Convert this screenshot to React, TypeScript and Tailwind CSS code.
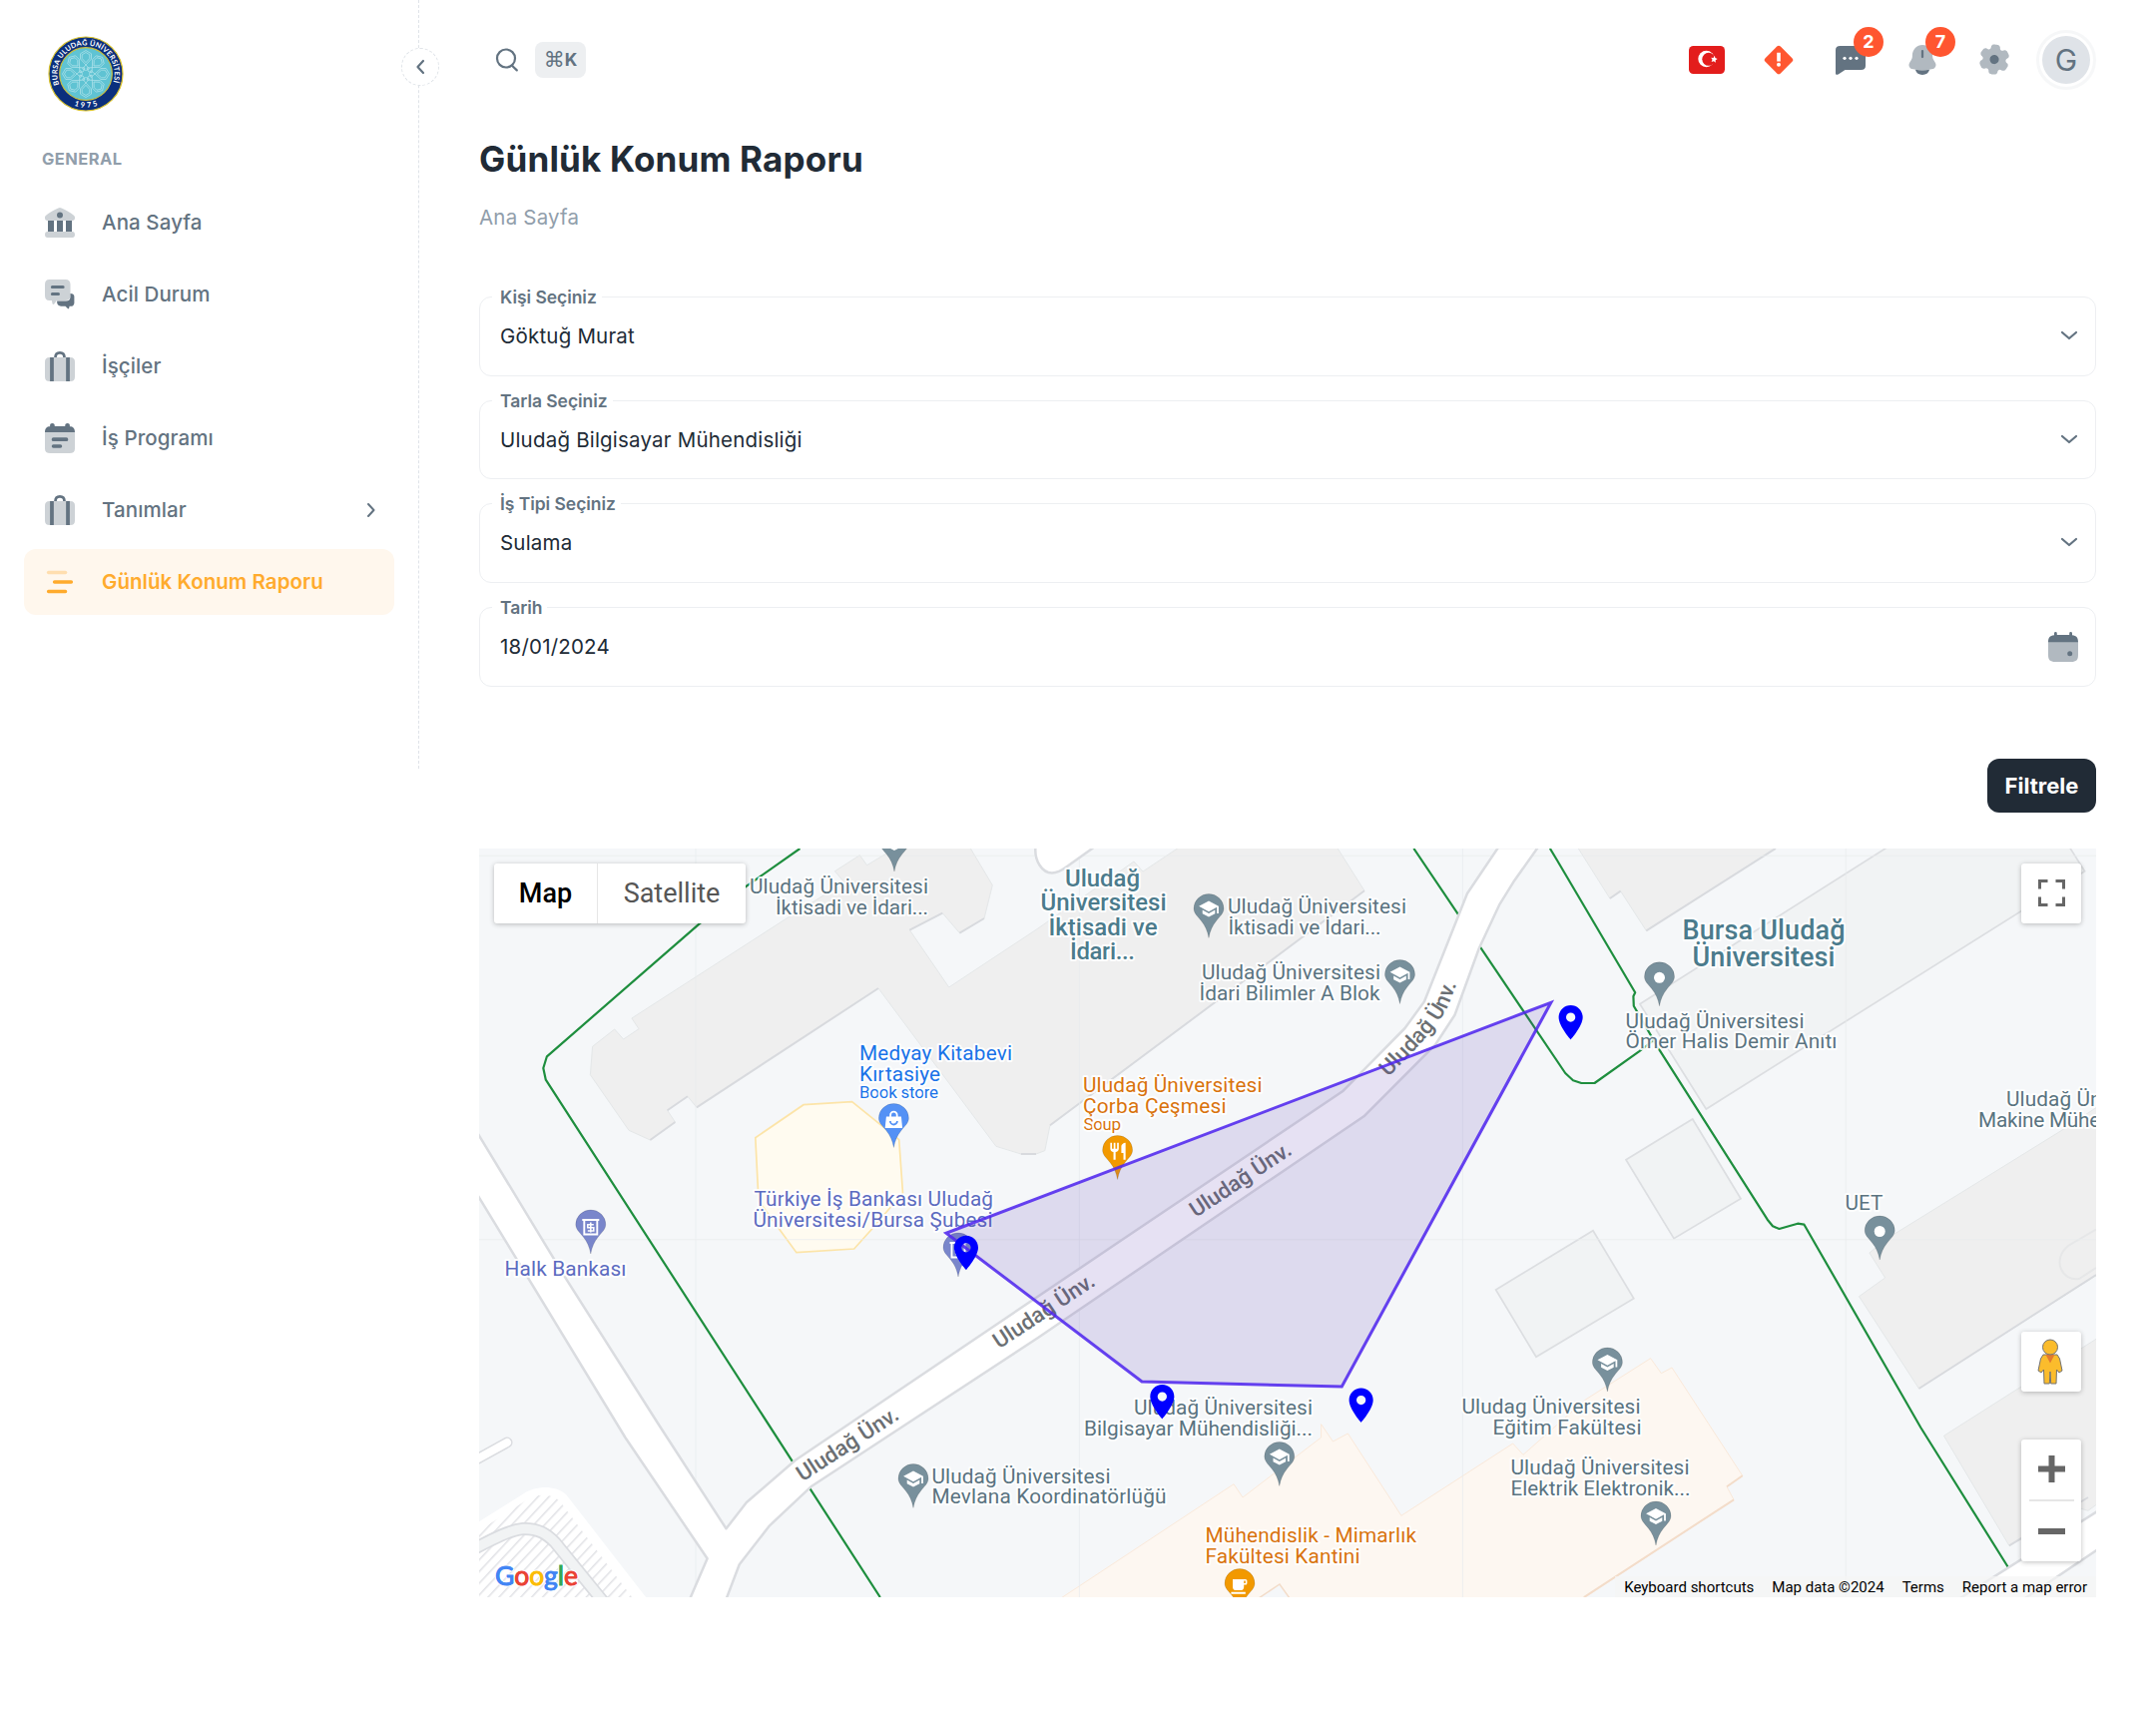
import React from 'react';

const INTER = "font-['Inter','Liberation_Sans',sans-serif]";

/* ---------- Sidebar icons (24 unit grid, duotone) ---------- */

function Duotone({ children }: { children: React.ReactNode }) {
  return (
    <svg viewBox="0 0 24 24" className="size-9 shrink-0" fill="currentColor">
      {children}
    </svg>
  );
}

const BankIcon = () => (
  <Duotone>
    <path opacity=".32" d="M10.9 2.25a2.6 2.6 0 0 1 2.2 0C16 3.5 19 5.300 20.900 6.800c.8.600 1.100 1 1.100 1.700v.5c0 1-.6 1.700-1.700 1.700H3.700C2.600 10.700 2 10 2 9v-.5c0-.7.3-1.100 1.100-1.700C5 5.300 8 3.500 10.900 2.250ZM3.700 18h16.600c1.100 0 1.700.8 1.700 2s-.6 2-1.700 2H3.700C2.600 22 2 21.200 2 20s.6-2 1.700-2Z" />
    <path d="M4 10.600h4V18H4zM10 10.600h4V18h-4zM16 10.600h4V18h-4zM12 5a2 2 0 1 1 0 4 2 2 0 0 1 0-4Z" />
  </Duotone>
);

const ChatsIcon = () => (
  <Duotone>
    <path d="M19 11.300v2.200c0 1.800-1 2.900-2.900 2.900h-6v1c0 1.300 1 2.200 2.600 2.400l3 .1 1.500 1.500c.3.300.8.200.9-.2l.3-1.300h.8c1.400 0 2.400-1 2.400-2.300v-4.300c0-1.200-1.100-2-2.600-2Z" />
    <path opacity=".32" d="M5 2h10.800C17.800 2 19 3.200 19 5.200v7.600c0 2-1.200 3.200-3.200 3.200h-5.900l-1.700 2.300c-.3.400-.9.400-1.200-.1L6.600 16H5c-2 0-3-1.200-3-3.200V5.200C2 3.200 3 2 5 2Z" />
    <path d="M6.900 6h7.200a1 1 0 1 1 0 2H6.900a1 1 0 1 1 0-2ZM6.900 10.600H11a1 1 0 1 1 0 2H6.900a1 1 0 1 1 0-2Z" />
  </Duotone>
);

const CaseIcon = () => (
  <Duotone>
    <path opacity=".32" d="M5 6h14c2 0 3 1 3 3v10c0 2-1 3-3 3H5c-2 0-3-1-3-3V9c0-2 1-3 3-3Z" />
    <path d="M5.400 6h2.500v16H5.400zM16.100 6h2.500v16h-2.500z" />
    <path d="M9 6c0-2 1-3.100 3-3.100S15 4 15 6" fill="none" stroke="currentColor" strokeWidth="1.800" />
  </Duotone>
);

const CalendarIcon = () => (
  <Duotone>
    <path opacity=".32" d="M2 8h20v11c0 2-1.200 3-3.500 3h-13C3.200 22 2 21 2 19Z" />
    <path d="M2 8c0-2.700 1.200-3.900 3.400-3.900V3.300C5.400 2.500 6 2 6.900 2s1.600.5 1.600 1.300V4h7v-.7C15.500 2.500 16.200 2 17.100 2s1.500.5 1.500 1.300v.8C20.800 4.100 22 5.300 22 8ZM7.700 11.500h8.600a1.200 1.200 0 1 1 0 2.500H7.700a1.200 1.200 0 1 1 0-2.500ZM7.700 16.100h4.600a1.200 1.200 0 1 1 0 2.400H7.700a1.200 1.200 0 1 1 0-2.400Z" />
  </Duotone>
);

const LinesIcon = () => (
  <Duotone>
    <g fill="none" stroke="currentColor" strokeWidth="2.300" strokeLinecap="round">
      <path opacity=".32" d="M4.400 5.700h11.300" />
      <path d="M8.400 12h11.200M4.400 18.300h11.300" />
    </g>
  </Duotone>
);

const nav = [
  { label: 'Ana Sayfa', icon: BankIcon },
  { label: 'Acil Durum', icon: ChatsIcon },
  { label: 'İşçiler', icon: CaseIcon },
  { label: 'İş Programı', icon: CalendarIcon },
  { label: 'Tanımlar', icon: CaseIcon, more: true },
  { label: 'Günlük Konum Raporu', icon: LinesIcon, active: true },
];

function Logo() {
  return (
    <svg viewBox="0 0 76 76" className="size-19">
      <defs>
        <path id="logo-top" d="M11.700 49.500A28.700 28.700 0 1 1 64.300 49.500" />
        <path id="logo-bottom" d="M20 66.600A34 34 0 0 0 56 66.600" />
      </defs>
      <circle cx="38" cy="38" r="37" fill="#0b2f7d" stroke="#d9c22e" strokeWidth="1.200" />
      <circle cx="38" cy="38" r="26.300" fill="#5fc3d3" stroke="#c9bf3f" strokeWidth="1.200" />
      <g fill="none" stroke="#c4ebf0" strokeWidth=".6">
        {[0, 45, 90, 135, 180, 225, 270, 315].map((a) => (
          <g key={a} transform={`rotate(${a} 38 38)`}>
            <path d="M38 14.500l5.500 3.300v5.200L38 29l-5.500-6v-5.200Z" />
            <path d="M38 16.500l3.800 2.300v3.700L38 26.700l-3.800-4.200v-3.700Z" />
            <path d="M38 29l-3.500 4 3.500 1.500 3.500-1.500Z" />
          </g>
        ))}
      </g>
      <text fill="#fff" fontSize="7.200" fontWeight="700" fontFamily="Lato, sans-serif">
        <textPath href="#logo-top" textLength="109" startOffset="1">BURSA ULUDAĞ ÜNİVERSİTESİ</textPath>
      </text>
      <text fill="#fff" fontSize="7.500" fontWeight="700" fontFamily="Lato, sans-serif">
        <textPath href="#logo-bottom" startOffset="7" textLength="24">1975</textPath>
      </text>
    </svg>
  );
}

function Sidebar() {
  return (
    <aside className="relative flex h-[770px] w-[420px] shrink-0 flex-col border-r border-dashed border-[#dfe3e8]">
      <div className="pt-9 pl-[47.500px]">
        <Logo />
      </div>
      <div className="mt-[35px] pl-[42px] text-[16.5px] leading-6 font-bold tracking-[0.45px] text-[#919eab]">GENERAL</div>
      <nav className="mt-[19px] flex flex-col gap-1.5 px-6">
        {nav.map(({ label, icon: Icon, more, active }) => (
          <a
            key={label}
            className={
              active
                ? 'flex h-[66px] items-center gap-6 rounded-xl bg-[#fff7ed] px-[18px] text-[20.5px] font-semibold tracking-[0.04px] text-[#ffab2d]'
                : 'flex h-[66px] items-center gap-6 rounded-xl px-[18px] text-[20.5px] font-medium tracking-[0.1px] text-[#637381]'
            }
          >
            <Icon />
            <span>{label}</span>
            {more && (
              <svg viewBox="0 0 10 16" className="ml-auto h-4 w-2.5" fill="none" stroke="currentColor" strokeWidth="2" strokeLinecap="round" strokeLinejoin="round">
                <path d="M2 2l5.500 6L2 14" />
              </svg>
            )}
          </a>
        ))}
      </nav>
      <button className="absolute top-12 -right-[21px] grid size-[38px] place-items-center rounded-full border border-dashed border-[#dfe3e8] bg-white text-[#637381]">
        <svg viewBox="0 0 10 16" className="h-4 w-2.5" fill="none" stroke="currentColor" strokeWidth="2.200" strokeLinecap="round" strokeLinejoin="round">
          <path d="M8 2L2.500 8 8 14" />
        </svg>
      </button>
    </aside>
  );
}

/* ---------- Header ---------- */

function IconButton({ badge, children }: { badge?: string; children: React.ReactNode }) {
  return (
    <button className="relative grid size-[60px] place-items-center text-[#637381]">
      {children}
      {badge && (
        <span className="absolute -top-[3px] left-[33px] grid size-[30px] place-items-center rounded-full bg-[#ff5630] text-[18px] leading-none font-bold text-white">
          {badge}
        </span>
      )}
    </button>
  );
}

function Header() {
  return (
    <header className="flex h-[120px] items-center justify-between pl-[18px]">
      <div className="flex items-center">
        <svg viewBox="0 0 24 24" className="-ml-0.5 size-6 text-[#637381]" fill="none" stroke="currentColor" strokeWidth="2.200" strokeLinecap="round">
          <circle cx="11" cy="10.500" r="9" />
          <path d="M17.500 18.200l4.300 4.200" />
        </svg>
        <span className="ml-4 flex h-9 w-[51px] items-center justify-center rounded-lg bg-[#edeff1] text-[17.500px] font-bold text-[#637381]">
          <span className="font-['DejaVu_Sans',sans-serif] text-[21px] leading-none font-normal">⌘</span>K
        </span>
      </div>
      <div className="flex items-center gap-3">
        <IconButton>
          <svg viewBox="0 0 36 28" className="h-7 w-9">
            <rect width="36" height="28" rx="4.500" fill="#e31d1c" />
            <circle cx="17.500" cy="13" r="8.200" fill="#fff" />
            <circle cx="19.800" cy="13.300" r="6.500" fill="#e31d1c" />
            <path d="M25.800 9.800l.6 2.300 2.300.9-2 1.300.1 2.400-1.900-1.500-2.300.7.900-2.200-1.300-2 2.300.2Z" fill="#fff" />
          </svg>
        </IconButton>
        <IconButton>
          <svg viewBox="0 0 32 32" className="size-8">
            <rect x="5.200" y="5.200" width="21.600" height="21.600" rx="2.600" transform="rotate(45 16 16)" fill="#ff5630" />
            <path d="M14.200 8.800h3.600v8.800h-3.600z" fill="#fff" />
            <circle cx="16" cy="20.700" r="2" fill="#fff" />
          </svg>
        </IconButton>
        <IconButton badge="2">
          <svg viewBox="0 0 30 30" className="size-[30px]" fill="currentColor">
            <path d="M4.500 1h21C28.500 1 30 2.500 30 5v16c0 2.500-1.500 4-4.500 4H9.500l-6.500 4.200C1.300 30.200 0 30 0 28.500V5C0 2.500 1.500 1 4.500 1Z" />
            <g fill="#fff">
              <circle cx="9" cy="13.300" r="1.600" />
              <circle cx="15" cy="13.300" r="1.600" />
              <circle cx="21" cy="13.300" r="1.600" />
            </g>
          </svg>
        </IconButton>
        <IconButton badge="7">
          <svg viewBox="0 0 24 24" className="size-9" fill="currentColor">
            <path opacity=".5" d="M18.750 9v.704c0 .845.240 1.671.692 2.374l1.108 1.723c1.011 1.574.239 3.713-1.520 4.210a25.800 25.800 0 0 1-14.060 0c-1.759-.497-2.531-2.636-1.520-4.210l1.108-1.723a4.400 4.400 0 0 0 .693-2.374V9c0-3.866 3.022-7 6.749-7s6.750 3.134 6.750 7" />
            <path d="M12.750 6a.75.75 0 0 0-1.500 0v4a.75.75 0 0 0 1.500 0zM7.243 18.545a5.002 5.002 0 0 0 9.513 0c-3.145.59-6.367.59-9.513 0" />
          </svg>
        </IconButton>
        <IconButton>
          <svg viewBox="0.500 0.300 24 24" className="size-9 rotate-6" fill="currentColor">
            <path opacity=".5" d="M14.279 2.152C13.909 2 13.439 2 12.500 2s-1.408 0-1.779.152a2 2 0 0 0-1.090 1.083c-.094.223-.13.484-.145.863a1.620 1.620 0 0 1-.796 1.353a1.640 1.640 0 0 1-1.579.008c-.338-.178-.583-.276-.825-.308a2.030 2.030 0 0 0-1.490.396c-.318.242-.553.646-1.022 1.453c-.47.807-.704 1.210-.757 1.605c-.07.526.074 1.058.4 1.479c.148.192.357.353.68.555c.477.297.783.803.783 1.361s-.306 1.064-.782 1.360c-.324.203-.533.364-.682.556a2 2 0 0 0-.399 1.479c.053.394.287.798.757 1.605s.704 1.210 1.022 1.453c.424.323.96.465 1.490.396c.242-.032.487-.13.825-.308a1.640 1.640 0 0 1 1.580.008c.486.280.774.795.795 1.353c.015.380.051.640.145.863c.204.490.596.880 1.090 1.083c.370.152.840.152 1.779.152s1.409 0 1.779-.152a2 2 0 0 0 1.090-1.083c.094-.223.130-.483.145-.863c.02-.558.309-1.074.796-1.353a1.640 1.640 0 0 1 1.579-.008c.338.178.583.276.825.308c.530.070 1.066-.073 1.490-.396c.318-.242.553-.646 1.022-1.453c.470-.807.704-1.210.757-1.605a2 2 0 0 0-.4-1.479c-.148-.192-.357-.353-.68-.555c-.477-.297-.783-.803-.783-1.361s.306-1.064.782-1.360c.324-.203.533-.364.682-.556a2 2 0 0 0 .399-1.479c-.053-.394-.287-.798-.757-1.605s-.704-1.210-1.022-1.453a2.030 2.030 0 0 0-1.490-.396c-.242.032-.487.130-.825.308a1.640 1.640 0 0 1-1.580-.008a1.620 1.620 0 0 1-.795-1.353c-.015-.38-.051-.64-.145-.863a2 2 0 0 0-1.090-1.083" />
            <circle cx="12.500" cy="12" r="3.050" />
          </svg>
        </IconButton>
        <button className="grid size-[60px] place-items-center rounded-full border-3 border-[#f6f7f8]">
          <span className="grid size-12 place-items-center rounded-full bg-[#dfe3e8] text-[30px] leading-none text-[#637381]">G</span>
        </button>
      </div>
    </header>
  );
}

/* ---------- Filter form ---------- */

function Field({ label, value, calendar }: { label: string; value: string; calendar?: boolean }) {
  return (
    <div className="relative flex h-[79.690px] items-center justify-between rounded-xl border-[1.500px] border-[#edeff2] pr-[17px] pl-5">
      <span className="absolute -top-3 left-3 bg-white pr-[5px] pl-2 text-[17.500px] leading-6 font-semibold tracking-[-0.050px] text-[#637381]">{label}</span>
      <span className="pt-px text-[20.500px] tracking-[0.200px] text-[#212b36]">{value}</span>
      {calendar ? (
        <svg viewBox="0 0 30 30" className="size-[30px] text-[#637381]" fill="currentColor">
          <path opacity=".5" d="M0 10.500h30V23c0 5-2 7-7 7H7c-5 0-7-2-7-7Z" />
          <path d="M0 10.500C0 6 1.500 3.500 6 3.200V1.500a1.400 1.400 0 0 1 2.800 0V3h12.400V1.500a1.400 1.400 0 0 1 2.800 0v1.700c4.500.3 6 2.800 6 7.300Z" />
          <circle cx="21.700" cy="21.700" r="2.500" />
        </svg>
      ) : (
        <svg viewBox="0 0 18 10" className="-mt-0.5 h-2.5 w-[18px]" fill="none" stroke="#637381" strokeWidth="2.200" strokeLinecap="round" strokeLinejoin="round">
          <path d="M2 2l7 6 7-6" />
        </svg>
      )}
    </div>
  );
}

/* ---------- Map ---------- */

const GRAY = '#5a7380';
const TEAL = '#4b7b8c';
const BLUE = '#1a73e8';
const INDIGO = '#5c6bc0';
const ORANGE = '#d9730d';

type Label = { t: string; x: number; y: number; w?: number; c: string; s?: number; b?: boolean };

const labels: Label[] = [
  { t: 'Uludağ Üniversitesi', x: 751, y: 895, w: 179, c: GRAY },
  { t: 'İktisadi ve İdari...', x: 777, y: 916, w: 153, c: GRAY },
  { t: 'Uludağ Üniversitesi', x: 1230, y: 914.8, w: 179, c: GRAY },
  { t: 'İktisadi ve İdari...', x: 1230.5, y: 935.8, w: 153, c: GRAY },
  { t: 'Uludağ Üniversitesi', x: 1204, y: 980.5, w: 179, c: GRAY },
  { t: 'İdari Bilimler A Blok', x: 1201.5, y: 1001.5, w: 181, c: GRAY },
  { t: 'Uludağ', x: 1067, y: 888, w: 75, c: TEAL, s: 24, b: true },
  { t: 'Üniversitesi', x: 1042.5, y: 912.3, w: 126, c: TEAL, s: 24, b: true },
  { t: 'İktisadi ve', x: 1050.5, y: 936.6, w: 109, c: TEAL, s: 24, b: true },
  { t: 'İdari...', x: 1072, y: 961, w: 65, c: TEAL, s: 24, b: true },
  { t: 'Bursa Uludağ', x: 1685.5, y: 941, w: 163, c: TEAL, s: 27, b: true },
  { t: 'Üniversitesi', x: 1695.5, y: 968, w: 143, c: TEAL, s: 27, b: true },
  { t: 'Uludağ Üniversitesi', x: 1628.5, y: 1029.5, w: 179, c: GRAY },
  { t: 'Ömer Halis Demir Anıtı', x: 1628.5, y: 1050, w: 212, c: GRAY },
  { t: 'Uludağ Üniversitesi', x: 2010, y: 1108, w: 179, c: GRAY },
  { t: 'Makine Mühendisliği', x: 1982, y: 1129, w: 186, c: GRAY },
  { t: 'UET', x: 1848.5, y: 1211.5, w: 38, c: GRAY },
  { t: 'Medyay Kitabevi', x: 861, y: 1061.5, w: 153, c: BLUE },
  { t: 'Kırtasiye', x: 861, y: 1082.5, w: 81, c: BLUE },
  { t: 'Book store', x: 861, y: 1100, w: 79, c: BLUE, s: 17 },
  { t: 'Türkiye İş Bankası Uludağ', x: 755.5, y: 1208, w: 239.5, c: INDIGO },
  { t: 'Üniversitesi/Bursa Şubesi', x: 754.5, y: 1229, w: 240, c: INDIGO },
  { t: 'Halk Bankası', x: 505.500, y: 1277.5, w: 122, c: INDIGO },
  { t: 'Uludağ Üniversitesi', x: 933.5, y: 1485.5, w: 179, c: GRAY },
  { t: 'Mevlana Koordinatörlüğü', x: 933.5, y: 1506, w: 235, c: GRAY },
  { t: 'Uludağ Üniversitesi', x: 1136, y: 1417, w: 179, c: GRAY },
  { t: 'Bilgisayar Mühendisliği...', x: 1086, y: 1438, w: 229, c: GRAY },
  { t: 'Uludag Üniversitesi', x: 1464.5, y: 1415.5, w: 179, c: GRAY },
  { t: 'Eğitim Fakültesi', x: 1495.5, y: 1436.8, w: 149, c: GRAY },
  { t: 'Uludağ Üniversitesi', x: 1513.5, y: 1476.5, w: 179, c: GRAY },
  { t: 'Elektrik Elektronik...', x: 1513.5, y: 1497.5, w: 180, c: GRAY },
  { t: 'Mühendislik - Mimarlık', x: 1207.5, y: 1544.5, w: 211.5, c: ORANGE },
  { t: 'Fakültesi Kantini', x: 1207.5, y: 1565.5, w: 155, c: ORANGE },
  { t: 'Uludağ Üniversitesi', x: 1085, y: 1094, w: 179.5, c: ORANGE },
  { t: 'Çorba Çeşmesi', x: 1085, y: 1114.7, w: 143.5, c: ORANGE },
  { t: 'Soup', x: 1085.5, y: 1132, w: 37.5, c: ORANGE, s: 17 },
];

function Glyph({ kind }: { kind: string }) {
  switch (kind) {
    case 'school':
      return <path transform="translate(-10.800 4.200) scale(.9)" d="M5 13.180v4L12 21l7-3.820v-4L12 17l-7-3.820zM12 3L1 9l11 6 9-4.910V17h2V9L12 3z" fill="#fff" />;
    case 'dot':
      return <circle cy="15.500" r="5.500" fill="#fff" />;
    case 'bag':
      return (
        <g>
          <path d="M-7.500 13h15l1.200 11.500H-8.700Z" fill="#fff" />
          <path d="M-3.300 14v-2.500a3.300 3.300 0 0 1 6.600 0V14" fill="none" stroke="#fff" strokeWidth="1.800" />
          <path d="M-3.500 17.500a3.500 3.500 0 0 0 7 0" fill="none" stroke="#5491f5" strokeWidth="1.800" />
        </g>
      );
    case 'food':
      return <path transform="translate(-9.800 5.500) scale(.85)" d="M11 9H9V2H7v7H5V2H3v7c0 2.120 1.660 3.840 3.750 3.970V22h2.500v-9.030C11.340 12.840 13 11.120 13 9V2h-2v7zm5-3v8h2.500v8H21V2c-2.760 0-5 2.240-5 4z" fill="#fff" />;
    case 'cup':
      return <path transform="translate(-10.200 8) scale(.8)" d="M20 3H4v10c0 2.210 1.790 4 4 4h6c2.210 0 4-1.790 4-4v-3h2c1.110 0 2-.89 2-2V5c0-1.110-.89-2-2-2zm0 5h-2V5h2v3zM2 19h18v2.500H2z" fill="#fff" />;
    default:
      return (
        <g fill="none" stroke="#fff">
          <path d="M-8.500 10h17" strokeWidth="2" />
          <path d="M-6.500 10v14.500h13V10" strokeWidth="1.900" />
          <path d="M3 14.800h-6v3h6v3.200h-6M0 12.500v10" strokeWidth="1.500" />
        </g>
      );
  }
}

const pois: [number, number, string, string][] = [
  [896, 829, 'school', '#78909c'],
  [1211, 895.5, 'school', '#78909c'],
  [1402.5, 961.5, 'school', '#78909c'],
  [1662.5, 963.8, 'dot', '#78909c'],
  [1883.2, 1218, 'dot', '#78909c'],
  [895.4, 1105.5, 'bag', '#5491f5'],
  [1119.6, 1137.5, 'food', '#f29900'],
  [591.8, 1212, 'bank', '#7986cb'],
  [960, 1235, 'bank', '#7986cb'],
  [915, 1466.5, 'school', '#78909c'],
  [1281.8, 1444.5, 'school', '#78909c'],
  [1610.4, 1350, 'school', '#78909c'],
  [1659, 1504, 'school', '#78909c'],
  [1242, 1571.5, 'cup', '#f29900'],
];

const markers: [number, number][] = [
  [1573.6, 1007],
  [1164.3, 1387],
  [1363.6, 1390.5],
  [967.9, 1237.7],
];

function MapDrawing() {
  return (
    <svg viewBox="480 850 1620 750" className="absolute inset-0 h-full w-full" fontFamily="Roboto, sans-serif">
      <defs>
        <pattern id="hatch" width="8" height="8" patternUnits="userSpaceOnUse" patternTransform="rotate(-47)">
          <rect width="8" height="8" fill="#fff" />
          <rect width="8" height="1.500" fill="#e1e2e6" />
        </pattern>
        <path id="road-curve" d="M1391 1079C1417 1052 1443 1027 1452 1005C1458 990 1462 979 1466 966" />
      </defs>
      <rect x="480" y="850" width="1620" height="750" fill="#f5f7f9" />

      {/* buildings */}
      <g fill="#efefef" stroke="#e4e7e8" strokeWidth="1">
        <path d="M836.400 872.700L861.400 856.700 868.600 866.700 898 849H971.800L994.300 886.700 986 920 961.400 934.700 944.300 914.700 911.400 931.700 950.700 989 1040 930 1136 863 1145 873 1181 849H1339.600L1367 892.300 1052 1127.300 1046.800 1152.700 1038 1156H1022.900L997.900 1148.300 880 990 697.900 1109.300 688.900 1098.300 668.600 1112.300 676.400 1124 651.400 1142 630 1132.300 591.400 1076.700 593.600 1048.300 615.700 1031 624.600 1041 640 1030.700 632.900 1020 790.700 918.300 846 884Z" />
        <path d="M1580.700 849L1612.900 900 1623.600 892.700 1649.300 932.300 1779 849Z" />
        <path d="M2101 1109L2064 1133.300 1890 1241 1872.900 1255 1888.600 1280 1862.500 1298.700 1922.500 1391 2101 1277Z" />
        <path d="M1947.500 1438.300L2101 1340.700V1506.700L2092 1513.300 2084 1511 2012.900 1548.300Z" />
      </g>
      <g fill="none" stroke="#d8dade" strokeWidth="2">
        <path d="M697.900 1109.300L880 990M986 920L961.400 934.700M944.300 914.700L911.400 931.700M688.900 1098.300L668.600 1112.300M676.400 1124L651.400 1142M1367 892.300L1052 1127.300M1038 1156H1022.900M1649.300 932.300L1779 850M1612.900 900L1623.600 892.700M1922.500 1391L2100 1277M2012.900 1548.300L2092 1500" />
      </g>
      <path d="M2100 1231.700L2072 1248C2055 1262 2066 1284 2083 1281L2100 1270" fill="none" stroke="#e6e7e8" strokeWidth="2" />
      <g fill="#f1f3f4" stroke="#dcdee1" strokeWidth="1.700">
        <path d="M1642.900 1005.700L1890.400 849H2073.600L2088.600 872.700 1709.300 1111Z" />
        <path d="M1629 1161.700L1695.700 1121 1744 1200.700 1677 1240.700Z" />
        <path d="M1498.600 1292L1596 1232.700 1636.800 1300.700 1539 1359.300Z" />
      </g>
      <path d="M756.800 1139.700L805 1106.700 853.600 1103.700 900.700 1141.700 904.500 1195 873 1231.700 855.700 1251 797.900 1254.700 760 1203Z" fill="#fffbf0" stroke="#fce4a8" strokeWidth="1.700" />

      {/* engineering faculty */}
      <path d="M1062.900 1601L1236 1486.700 1245 1500 1323.600 1440 1323.600 1426.700 1335.400 1444 1350.400 1436 1403.900 1518.300 1515.700 1446 1526 1457.300 1588.600 1402 1653.600 1360.700 1664.300 1375.700 1675 1370 1745.700 1478.300 1730 1489.300 1737 1502.300 1586.800 1601Z" fill="#fdf7f1" stroke="#fae9da" strokeWidth="1" />
      <path d="M1745.700 1478.300L1730 1489.300M1737 1502.300L1586.800 1600" fill="none" stroke="#f3dcc9" strokeWidth="2" />
      <path d="M1261 1601L1282 1587 1292 1601Z" fill="#f5f7f9" stroke="#f3dcc9" strokeWidth="1.500" />

      {/* parking area */}
      <path d="M479 1525L525 1496C536 1489 555 1487 567 1497L647.900 1601H479Z" fill="#fff" />
      <path d="M479 1534L527 1503C538 1496 553 1496 561 1504L634 1601H479Z" fill="url(#hatch)" />
      <g fill="none" strokeLinejoin="round">
        <path d="M470 1554C495 1541 510 1533 524 1531.500C540 1531 548 1537 556 1545L604 1604" stroke="#dadce0" strokeWidth="13" />
        <path d="M470 1554C495 1541 510 1533 524 1531.500C540 1531 548 1537 556 1545L604 1604" stroke="#f1f3f4" strokeWidth="9.500" />
        <path d="M470 1466L508 1445" stroke="#dadce0" strokeWidth="11" strokeLinecap="round" />
        <path d="M470 1466L508 1445" stroke="#fff" strokeWidth="8" strokeLinecap="round" />
      </g>

      {/* tile seams */}
      <path d="M697 850V1600M1081.400 850V1600M1465.400 850V1600M1849.300 850V1600M480 857.300H2100M480 1241.700H2100" stroke="#e8ebee" strokeOpacity=".7" strokeWidth="1" />

      {/* green boundary */}
      <g fill="none" stroke="#1e8e3e" strokeWidth="2.200" strokeLinejoin="round">
        <path d="M801.400 850L747.900 887.700 700.400 925.700 547.900 1058.300 544.300 1070 546.800 1081.700 881.800 1600" />
        <path d="M1416.400 850L1568.200 1075 1576 1082.300 1584.300 1085H1597.500L1642 1053.300 1658 1041" />
        <path d="M1552.900 850L1560 861.700 1638.200 994.300 1636.400 998 1636.800 1007.700 1661.800 1050.700 1770.700 1221.700 1776 1228.300 1782.500 1231 1801 1225.700 1807.500 1226.700 1924.300 1430 2012.500 1571 2030 1600" />
      </g>

      {/* roads */}
      <g fill="#fff" stroke="#dadce0" strokeWidth="2.500" strokeLinejoin="round">
        <path d="M1037.500 848C1036 862 1044 874.500 1054 874.500C1060 874.500 1065 871 1069 868L1097 848Z" />
        <path d="M1501 849L1470 895 1427 1003.300 1407.500 1030 1345 1093.300 1127 1240 796.800 1462.700 747.900 1505 727.500 1531.300 658.600 1425 567.500 1281.700 476 1131V1193L626.400 1440 708.600 1561.300 691 1602H727.500L740.700 1567.300 771 1528.300 813.200 1488.700 1040 1340 1216.400 1220 1366.400 1118.300 1437.900 1046.700 1457.500 1016.700 1481.800 950 1502 906.700 1516.400 883.300 1540.700 849Z" />
        <path d="M1963.600 1601L2102 1513.500V1552L2026 1603Z" />
      </g>

      {/* road names */}
      <g fill="#6b6f73" fontSize="22" fontWeight="500">
        <text transform="translate(804 1484.500) rotate(-33)" textLength="117">Uludağ Ünv.</text>
        <text transform="translate(1001 1351.500) rotate(-33.500)" textLength="117">Uludağ Ünv.</text>
        <text transform="translate(1198 1220) rotate(-33.500)" textLength="117">Uludağ Ünv.</text>
        <text>
          <textPath href="#road-curve" textLength="117">Uludağ Ünv.</textPath>
        </text>
      </g>

      {/* points of interest */}
      {pois.map(([x, y, kind, color]) => (
        <g key={`${x}-${y}`} transform={`translate(${x} ${y})`}>
          <path d="M0 44C-1.300 37-3.500 32-7.500 27C-12 21.500-15 19-15 14.500A15 14.500 0 0 1 15 14.500C15 19 12 21.500 7.500 27C3.500 32 1.300 37 0 44Z" fill={color} stroke="#000" strokeOpacity=".12" strokeWidth="1" />
          <Glyph kind={kind} />
        </g>
      ))}
      <g stroke="#fff" strokeWidth="4" strokeLinejoin="round" paintOrder="stroke">
        {labels.map(({ t, x, y, w, c, s = 20.8, b }) => (
          <text key={`${x}-${y}`} x={x} y={y} textLength={w} fontSize={s} fontWeight={b ? 500 : 400} fill={c} strokeOpacity=".9">
            {t}
          </text>
        ))}
      </g>

      {/* selected field and its corners */}
      <path d="M1553.900 1004.300L1344.300 1389 1144 1384 947.900 1235.300Z" fill="#5535b0" fillOpacity=".15" stroke="#5128ee" strokeOpacity=".88" strokeWidth="3" />
      {markers.map(([x, y]) => (
        <path key={x} transform={`translate(${x - 20.6} ${y - 3.4}) scale(1.720)`} fill="#00f" d="M12 2C8.130 2 5 5.130 5 9c0 5.250 7 13 7 13s7-7.750 7-13c0-3.870-3.130-7-7-7zm0 9.700a2.700 2.700 0 1 1 0-5.400 2.700 2.700 0 0 1 0 5.400z" />
      ))}
    </svg>
  );
}

const card = 'bg-white shadow-[0_1px_5px_rgba(0,0,0,0.25)] rounded-[3px]';

function MapPanel() {
  return (
    <div className="relative mt-9 h-[750px] overflow-hidden font-['Roboto',sans-serif]">
      <MapDrawing />
      <div className={`absolute top-[15px] left-[15px] flex h-[60px] w-[252px] text-[27px] ${card}`}>
        <div className="flex w-[104px] items-center justify-center border-r border-[#e6e6e6] pt-px font-medium text-black">Map</div>
        <div className="flex flex-1 items-center justify-center pt-px text-[#565656]">Satellite</div>
      </div>
      <div className={`absolute top-[15px] right-[15px] grid size-[60px] place-items-center ${card}`}>
        <svg viewBox="0 0 27 27" className="size-[27px]" fill="none" stroke="#666" strokeWidth="3">
          <path d="M1.500 9.500v-8h8M17.500 1.500h8v8M25.500 17.500v8h-8M9.500 25.500h-8v-8" />
        </svg>
      </div>
      <div className={`absolute top-[484px] right-[15px] grid size-[60px] place-items-center ${card}`}>
        <svg viewBox="0 0 26 46" className="mr-0.5 h-[46px] w-[26px]" stroke="#737373" strokeWidth="1">
          <path d="M6 16h14l2.500 4L25 32l-3 2-2.500-3-.5 14h-5.300L13 33l-.7 12H7l-.5-14L4 34l-3-2L3.500 20Z" fill="#fbbc2c" />
          <path d="M8.500 16h9L13 24.500Z" fill="#e37a2e" stroke="none" />
          <circle cx="13" cy="8.500" r="7.500" fill="#fbbc2c" />
        </svg>
      </div>
      <div className={`absolute top-[592px] right-[15px] flex h-[122px] w-[60px] flex-col items-center ${card}`}>
        <div className="grid flex-1 place-items-center">
          <svg viewBox="0 0 27 27" className="size-[27px]" fill="#666">
            <path d="M10.500 0h6v10.500H27v6H16.500V27h-6V16.500H0v-6h10.500z" />
          </svg>
        </div>
        <div className="h-[1.500px] w-[45px] bg-[#e6e6e6]" />
        <div className="grid flex-1 place-items-center">
          <div className="h-1.5 w-[27px] bg-[#666]" />
        </div>
      </div>
      <svg viewBox="0 0 90 36" className="absolute top-[712px] left-[14px] h-9 w-[90px] overflow-visible">
        <text x="2" y="26" textLength="83" lengthAdjust="spacingAndGlyphs" fontSize="27.500" fontWeight="400" fontFamily="Lato, sans-serif" stroke="#fff" strokeWidth="3" strokeLinejoin="round" paintOrder="stroke">
          <tspan fill="#4285f4">G</tspan>
          <tspan fill="#ea4335">o</tspan>
          <tspan fill="#fbbc05">o</tspan>
          <tspan fill="#4285f4">g</tspan>
          <tspan fill="#34a853">l</tspan>
          <tspan fill="#ea4335">e</tspan>
        </text>
        <text x="2" y="26" textLength="83" lengthAdjust="spacingAndGlyphs" fontSize="27.500" fontFamily="Lato, sans-serif" strokeWidth=".9" aria-hidden="true">
          <tspan fill="#4285f4" stroke="#4285f4">G</tspan>
          <tspan fill="#ea4335" stroke="#ea4335">o</tspan>
          <tspan fill="#fbbc05" stroke="#fbbc05">o</tspan>
          <tspan fill="#4285f4" stroke="#4285f4">g</tspan>
          <tspan fill="#34a853" stroke="#34a853">l</tspan>
          <tspan fill="#ea4335" stroke="#ea4335">e</tspan>
        </text>
      </svg>
      <div className="absolute right-0 bottom-0 flex h-[21px] items-center gap-[18px] bg-[#f5f5f5]/70 px-[9px] pt-0.5 text-[15px] text-black">
        <span>Keyboard shortcuts</span>
        <span>Map data ©2024</span>
        <span>Terms</span>
        <span>Report a map error</span>
      </div>
    </div>
  );
}

export default function App() {
  return (
    <div className={`flex h-[1732px] w-[2160px] bg-white ${INTER}`}>
      <Sidebar />
      <main className="flex flex-1 flex-col px-[60px]">
        <Header />
        <h1 className="mt-3 text-[35px] leading-[54px] font-bold tracking-[0.180px] text-[#212b36]">Günlük Konum Raporu</h1>
        <div className="mt-4 text-[20.500px] leading-8 tracking-[0.200px] text-[#919eab]">Ana Sayfa</div>
        <form className="mt-[63px] flex flex-col gap-6">
          <Field label="Kişi Seçiniz" value="Göktuğ Murat" />
          <Field label="Tarla Seçiniz" value="Uludağ Bilgisayar Mühendisliği" />
          <Field label="İş Tipi Seçiniz" value="Sulama" />
          <Field label="Tarih" value="18/01/2024" calendar />
        </form>
        <button className="mt-[72px] h-[54px] w-[109px] self-end rounded-xl bg-[#212b36] pt-px text-[22px] font-bold text-white">Filtrele</button>
        <MapPanel />
      </main>
    </div>
  );
}
